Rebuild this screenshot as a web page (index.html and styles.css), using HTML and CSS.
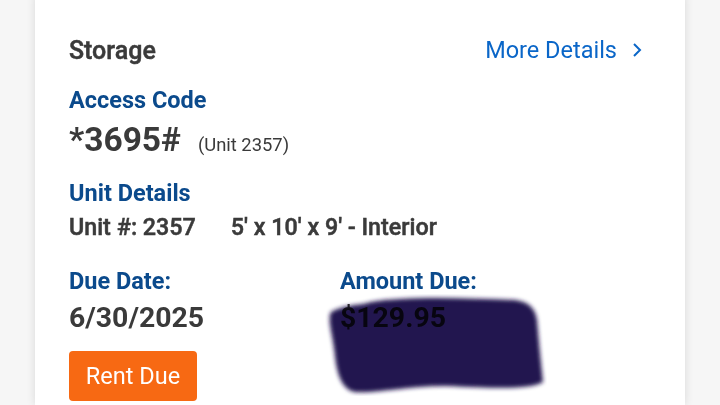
FILE: index.html
```html
<!DOCTYPE html>
<html lang="en">
<head>
    <meta charset="UTF-8">
    <title>Storage</title>
    <link rel="stylesheet" href="styles.css">
</head>
<body>
<div class="card">
    <div class="head">
        <span class="title">Storage</span>
        <a class="more" href="#">More Details
            <svg width="12" height="16" viewBox="0 0 12 16"><polyline points="3,2 9,8 3,14" fill="none" stroke="#0a66c8" stroke-width="2"/></svg>
        </a>
    </div>

    <div class="label first">Access Code</div>
    <div class="code"><span class="num">*3695#</span><span class="unit">(Unit 2357)</span></div>

    <div class="label gap">Unit Details</div>
    <div class="details"><span>Unit #: 2357</span><span>5' x 10' x 9' - Interior</span></div>

    <div class="cols">
        <div class="col">
            <div class="label">Due Date:</div>
            <div class="value">6/30/2025</div>
            <button class="btn">Rent Due</button>
        </div>
        <div class="col">
            <div class="label">Amount Due:</div>
            <div class="value amount">$129.95
                <svg class="blob" width="222" height="102" viewBox="0 0 222 102">
                    <filter id="soft"><feGaussianBlur stdDeviation="2.2"/></filter>
                    <path filter="url(#soft)" fill="#21194f" d="M6,18 C20,10 34,12 46,8 C80,2 140,4 190,6 C204,8 210,14 212,26 C214,50 216,70 218,88 C205,96 170,94 120,92 C80,92 50,100 30,98 C18,96 12,82 10,62 C8,42 2,26 6,18 Z"/>
                </svg>
            </div>
        </div>
    </div>
</div>
</body>
</html>
```

FILE: styles.css
```css
*{
    margin:0;
    padding:0;
    box-sizing:border-box;
}
body{
    background:#f6f6f6;
    font-family:Roboto, "Liberation Sans", sans-serif;
    color:#3a3a3a;
    height:405px;
    overflow:hidden;
}
.card{
    background:#fff;
    margin:-8px 35px 0 35px;
    height:413px;
    border-radius:8px 8px 0 0;
    box-shadow:0 0 10px rgba(0,0,0,0.12);
    padding:44px 42px 0 34px;
    display:flex;
    flex-direction:column;
}
.head{
    display:flex;
    justify-content:space-between;
    align-items:center;
    height:28px;
}
.title{
    font-family:"Roboto Medium", Roboto, "Liberation Sans", sans-serif;
    font-size:25px;
    font-weight:500;
    -webkit-text-stroke:0.5px #3a3a3a;
}
.more{
    color:#0a66c8;
    font-size:23.5px;
    text-decoration:none;
    display:flex;
    align-items:center;
    gap:14px;
}
.label{
    color:#0b4a8c;
    font-size:23.5px;
    font-weight:700;
    line-height:28px;
}
.label.first{
    margin-top:22px;
}
.label.gap{
    margin-top:19px;
}
.code{
    margin-top:6px;
    height:40px;
    display:flex;
    align-items:baseline;
    gap:17px;
}
.code .num{
    font-size:33.5px;
    font-weight:700;
    line-height:40px;
}
.code .unit{
    font-size:18.4px;
}
.details{
    margin-top:6px;
    font-family:"Roboto Medium", Roboto, "Liberation Sans", sans-serif;
    font-size:23.3px;
    font-weight:500;
    -webkit-text-stroke:0.5px #3a3a3a;
    line-height:28px;
    display:flex;
    gap:35px;
}
.cols{
    margin-top:26px;
    display:flex;
}
.col{
    width:271px;
    display:flex;
    flex-direction:column;
    align-items:flex-start;
}
.value{
    margin-top:6px;
    font-size:28.4px;
    font-weight:700;
    line-height:34px;
    position:relative;
}
.amount{
    color:#333;
}
.blob{
    position:absolute;
    left:-15px;
    top:-7px;
    mix-blend-mode:multiply;
}
.btn{
    margin-top:16px;
    width:128px;
    height:50px;
    border:0;
    border-radius:4px;
    background:#f76913;
    color:#fff;
    font-family:Roboto, "Liberation Sans", sans-serif;
    font-size:23.5px;
}
```
